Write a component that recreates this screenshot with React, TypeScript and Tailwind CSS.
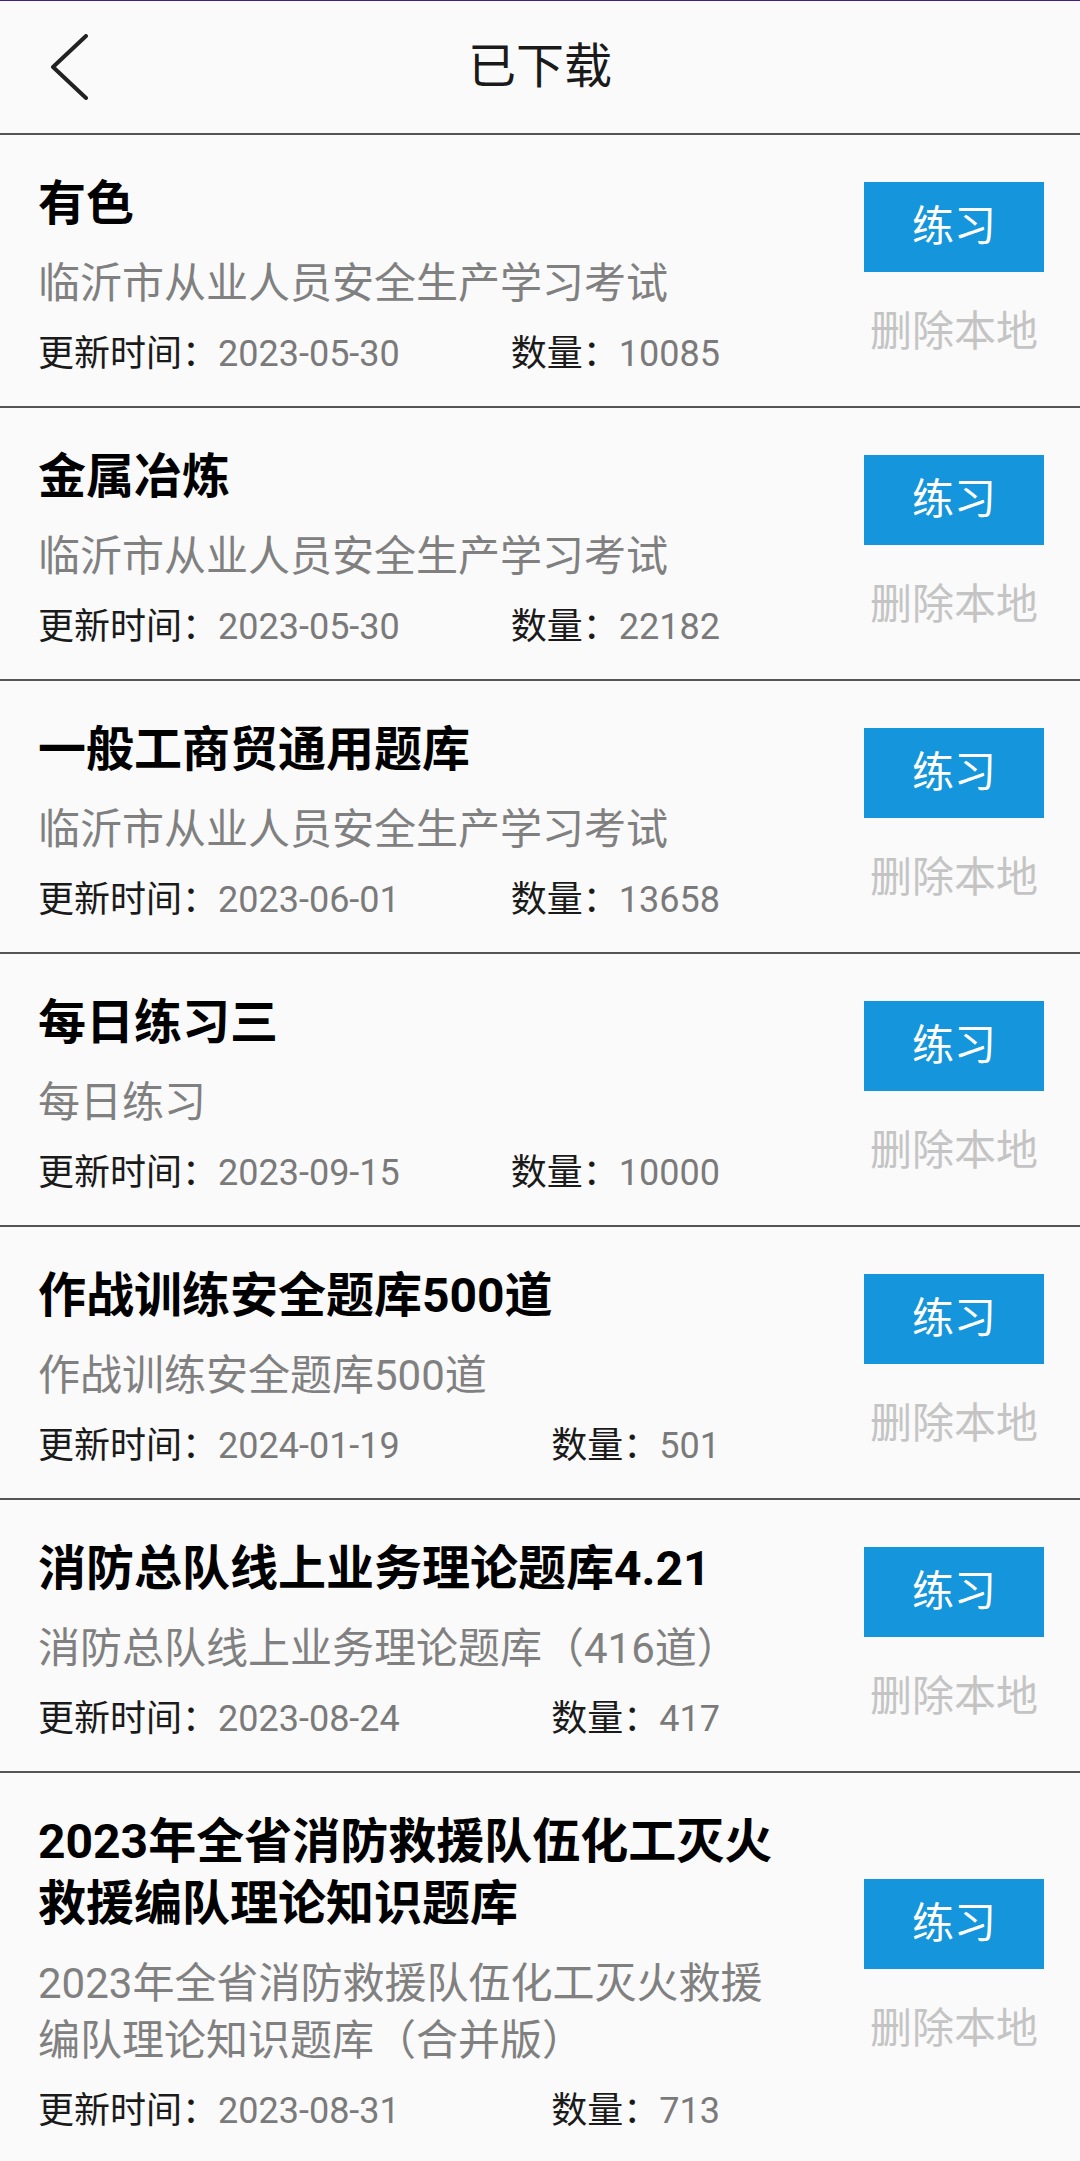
import React from "react";

type Item = {
  title: string;
  sub: string;
  date: string;
  count: string;
};

const items: Item[] = [
  { title: "有色", sub: "临沂市从业人员安全生产学习考试", date: "2023-05-30", count: "10085" },
  { title: "金属冶炼", sub: "临沂市从业人员安全生产学习考试", date: "2023-05-30", count: "22182" },
  { title: "一般工商贸通用题库", sub: "临沂市从业人员安全生产学习考试", date: "2023-06-01", count: "13658" },
  { title: "每日练习三", sub: "每日练习", date: "2023-09-15", count: "10000" },
  { title: "作战训练安全题库500道", sub: "作战训练安全题库500道", date: "2024-01-19", count: "501" },
  { title: "消防总队线上业务理论题库4.21", sub: "消防总队线上业务理论题库（416道）", date: "2023-08-24", count: "417" },
  {
    title: "2023年全省消防救援队伍化工灭火救援编队理论知识题库",
    sub: "2023年全省消防救援队伍化工灭火救援编队理论知识题库（合并版）",
    date: "2023-08-31",
    count: "713",
  },
];

function Row({ item, last }: { item: Item; last: boolean }) {
  return (
    <div className={"flex items-center pl-[38px] pr-[36px] " + (last ? "" : "border-b-2 border-[#555555]")}>
      <div className="flex-1 min-w-0 mr-[74px] pt-[38px] pb-[28px]">
        <div className="text-[48px] leading-[62px] font-bold text-black">{item.title}</div>
        <div className="mt-[20px] text-[42px] leading-[57px] text-[#808080]">{item.sub}</div>
        <div className="mt-[18px] w-[682px] flex justify-between text-[36px] leading-[48px] whitespace-nowrap">
          <div>
            <span className="text-[#1a1a1a]">更新时间：</span>
            <span className="text-[#7a7a7a]">{item.date}</span>
          </div>
          <div>
            <span className="text-[#1a1a1a]">数量：</span>
            <span className="text-[#7a7a7a]">{item.count}</span>
          </div>
        </div>
      </div>
      <div className="w-[180px] flex flex-col items-center">
        <div className="w-[180px] h-[90px] bg-[#1595db] flex items-center justify-center text-white text-[42px] leading-none">
          练习
        </div>
        <div className="mt-[32px] text-[42px] leading-[56px] text-[#c4c4c4] whitespace-nowrap">删除本地</div>
      </div>
    </div>
  );
}

export default function App() {
  return (
    <div
      className="w-[1080px] min-h-[2161px] bg-[#fafafa] border-t border-[#3b1f86] overflow-hidden"
      style={{ fontFamily: "Roboto, 'Noto Sans CJK SC', sans-serif" }}
    >
      <div className="h-[134px] grid grid-cols-[1fr_auto_1fr] items-center border-b-2 border-[#555555]">
        <div className="pl-[50px] flex items-center">
          <svg width="40" height="66" viewBox="0 0 40 66" fill="none">
            <path
              d="M36 2 L3 33 L36 64"
              stroke="#222222"
              strokeWidth="4"
              strokeLinecap="round"
              strokeLinejoin="round"
            />
          </svg>
        </div>
        <div className="text-[48px] leading-none text-[#1a1a1a]">已下载</div>
        <div />
      </div>
      {items.map((it, i) => (
        <Row key={i} item={it} last={i === items.length - 1} />
      ))}
    </div>
  );
}
